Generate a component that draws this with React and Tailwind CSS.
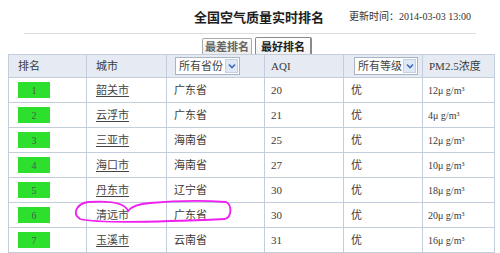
const rows = [
  { rank: 1, city: "韶关市", prov: "广东省", aqi: 20, pm: 12 },
  { rank: 2, city: "云浮市", prov: "广东省", aqi: 21, pm: 4 },
  { rank: 3, city: "三亚市", prov: "海南省", aqi: 25, pm: 12 },
  { rank: 4, city: "海口市", prov: "海南省", aqi: 27, pm: 10 },
  { rank: 5, city: "丹东市", prov: "辽宁省", aqi: 30, pm: 18 },
  { rank: 6, city: "清远市", prov: "广东省", aqi: 30, pm: 20 },
  { rank: 7, city: "玉溪市", prov: "云南省", aqi: 31, pm: 16 },
];

function Select({ label, width }) {
  return (
    <div
      className={`flex items-center h-[18px] ${width} border border-[#a9b4c4] bg-white pl-[3px]`}
    >
      <span className="whitespace-nowrap text-[11px] text-[#444] leading-none">{label}</span>
      <span className="ml-auto mr-[1px] flex shrink-0 items-center justify-center w-[13px] h-[14px] bg-[#dfe8f5] border border-[#c3d1e6]">
        <svg width="8" height="6" viewBox="0 0 8 6">
          <path d="M1 1.5 L4 4.5 L7 1.5" fill="none" stroke="#3a6cc0" strokeWidth="1.6" />
        </svg>
      </span>
    </div>
  );
}

export default function App() {
  return (
    <div className="relative w-[500px] h-[253px] overflow-hidden bg-white text-[#3a3a3a] font-['Liberation_Serif','Noto_Sans_CJK_SC',serif]">
      <div className="mx-[24px] h-[34px] border-b border-[#dcdcdc] flex items-center">
        <h1 className="ml-[170px] text-[13px] font-bold text-[#1e1e1e] font-['Noto_Sans_CJK_SC',sans-serif]">
          全国空气质量实时排名
        </h1>
        <span className="ml-auto mr-[5px] text-[10px] text-[#333]">
          更新时间：2014-03-03 13:00
        </span>
      </div>

      <div className="flex items-end gap-[3px] pl-[202px] mt-[3px] h-[17px]">
        <div className="w-[50px] h-[16px] border border-b-0 border-[#a8a8a8] rounded-t-[2px] bg-gradient-to-b from-white to-[#ececec] flex items-center justify-center text-[11px] font-bold text-[#666] font-['Noto_Sans_CJK_SC',sans-serif]">
          最差排名
        </div>
        <div className="w-[57px] h-[17px] border border-b-0 border-r-2 border-[#8a8a8a] rounded-t-[2px] bg-gradient-to-b from-white to-[#f2f2f2] flex items-center justify-center text-[11px] font-bold text-[#222] font-['Noto_Sans_CJK_SC',sans-serif]">
          最好排名
        </div>
      </div>

      <table className="ml-[8px] w-[486px] table-fixed border-collapse text-[11px]">
        <colgroup>
          <col className="w-[78px]" />
          <col className="w-[80px]" />
          <col className="w-[98px]" />
          <col className="w-[79px]" />
          <col className="w-[79px]" />
          <col className="w-[72px]" />
        </colgroup>
        <thead>
          <tr className="h-[23px] bg-[#e6ebf3]">
            <th className="border border-[#c3cddb] pl-[9px] text-left font-normal">排名</th>
            <th className="border border-[#c3cddb] pl-[9px] text-left font-normal">城市</th>
            <th className="border border-[#c3cddb] pl-[8px] text-left font-normal">
              <Select label="所有省份" width="w-[65px]" />
            </th>
            <th className="border border-[#c3cddb] pl-[6px] text-left font-normal">AQI</th>
            <th className="border border-[#c3cddb] pl-[10px] text-left font-normal">
              <Select label="所有等级" width="w-[64px]" />
            </th>
            <th className="border border-[#c3cddb] pl-[6px] text-left font-normal">PM2.5浓度</th>
          </tr>
        </thead>
        <tbody>
          {rows.map((r) => (
            <tr key={r.rank} className="h-[25px]">
              <td className="border border-[#c3cddb] pl-[9px]">
                <div className="w-[32px] h-[16px] bg-[#2ee02e] flex items-center justify-center text-[10px] text-[#4a5a4a]">
                  {r.rank}
                </div>
              </td>
              <td className="border border-[#c3cddb] pl-[9px]">
                <a className="underline text-[#444] underline-offset-2">{r.city}</a>
              </td>
              <td className="border border-[#c3cddb] pl-[7px]">{r.prov}</td>
              <td className="border border-[#c3cddb] pl-[6px]">{r.aqi}</td>
              <td className="border border-[#c3cddb] pl-[7px]">优</td>
              <td className="border border-[#c3cddb] pl-[5px] text-[10px]">
                {r.pm}μ g/m³
              </td>
            </tr>
          ))}
        </tbody>
      </table>

      <svg
        className="absolute left-0 top-0 pointer-events-none"
        width="500"
        height="253"
        viewBox="0 0 500 253"
      >
        <path
          d="M88 202 C76 204, 72 214, 80 219 C100 224, 160 222, 225 219 C232 217, 232 205, 226 202 C200 200, 172 201, 150 203 C136 204, 131 207, 128 211 C126 205, 116 200, 88 202"
          fill="none"
          stroke="#f020f0"
          strokeWidth="1.8"
        />
      </svg>
    </div>
  );
}
